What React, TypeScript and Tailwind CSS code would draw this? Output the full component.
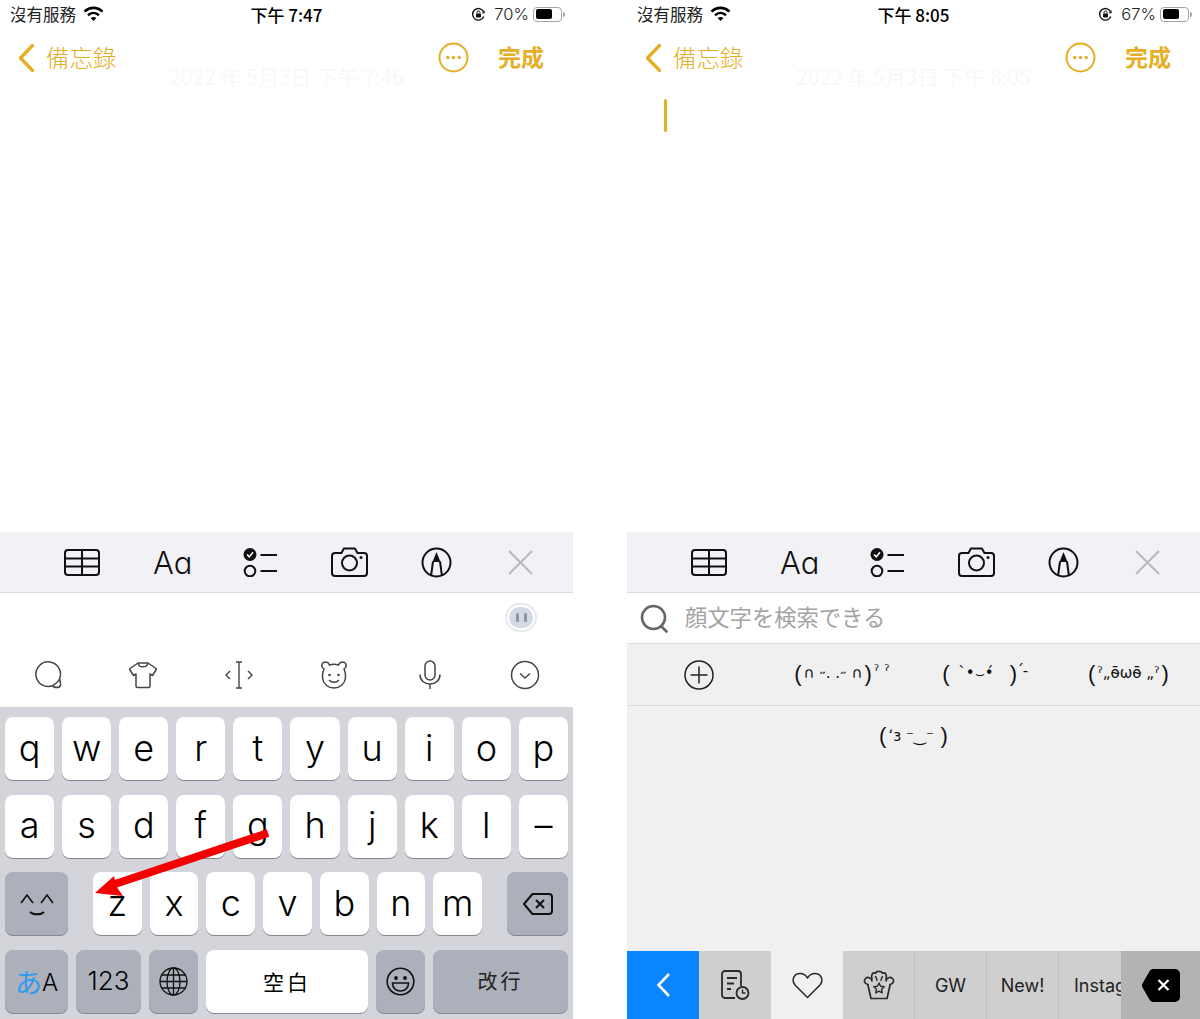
import React from 'react'

const AMBER = '#e5ae24'
const ROWS = ['qwertyuiop', 'asdfghjkl–']
const ROW3 = ['z', 'x', 'c', 'v', 'b', 'n', 'm']
const cjk = "font-['Noto_Sans_CJK_TC',sans-serif]"

function Wifi() {
  return (
    <svg width="21" height="16" viewBox="0 0 21 16" fill="none" stroke="#000" strokeWidth="2.6">
      <path d="M1.5 5.6C6.8.6 14.2.6 19.5 5.6" />
      <path d="M5 9.2c3.3-3 7.7-3 11 0" />
      <path d="M10.5 15 7.6 12c1.7-1.4 4.1-1.4 5.8 0z" fill="#000" stroke="none" />
    </svg>
  )
}

function StatusBar({ time, pct }: { time: string; pct: number }) {
  return (
    <div className={`grid grid-cols-3 items-center h-[28px] pl-[10px] pr-[8px] text-black ${cjk}`}>
      <div className="flex items-center gap-[7px]">
        <span className="text-[16.5px] leading-none text-[#222]">沒有服務</span>
        <Wifi />
      </div>
      <span className="text-center text-[17px] font-medium leading-none pr-[2px]">下午 {time}</span>
      <div className="flex items-center justify-end">
        <svg width="15" height="15" viewBox="0 0 15 15" fill="none" stroke="#111" strokeWidth="1.4">
          <path d="M12.8 9.5A5.8 5.8 0 1 1 12.6 4.6" />
          <path d="M13.6 3.2v3h-3" fill="#111" stroke="none" />
          <rect x="5" y="6.5" width="5" height="4" rx=".8" fill="#111" stroke="none" />
          <path d="M6 6.5V5.4a1.5 1.5 0 0 1 3 0v1.1" strokeWidth="1" />
        </svg>
        <span className="ml-[8px] text-[16.5px] leading-none text-[#222] font-['Inter',sans-serif] font-light">{pct}%</span>
        <div className="ml-[4px] flex items-center">
          <div className="w-[29px] h-[15px] rounded-[4px] border border-[#a5a5a5] p-[1.5px]">
            <div className="h-full rounded-[2px] bg-black" style={{ width: `${pct}%` }} />
          </div>
          <div className="ml-[1px] w-[2px] h-[5px] rounded-r-full bg-[#a5a5a5]" />
        </div>
      </div>
    </div>
  )
}

function NavBar() {
  return (
    <div className={`flex items-center h-[59px] pl-[18px] pr-[29px] ${cjk}`} style={{ color: AMBER }}>
      <svg width="17" height="30" viewBox="0 0 17 30" fill="none" stroke={AMBER} strokeWidth="3.4" strokeLinecap="round" strokeLinejoin="round">
        <path d="M14.5 2.5 2.5 15l12 12.5" />
      </svg>
      <span className="ml-[11px] text-[23.5px] leading-none font-light">備忘錄</span>
      <svg className="ml-auto" width="31" height="31" viewBox="0 0 31 31" fill="none" stroke={AMBER} strokeWidth="2">
        <circle cx="15.5" cy="15.5" r="14" />
        <g fill={AMBER} stroke="none">
          <circle cx="9.8" cy="15.5" r="1.7" />
          <circle cx="15.5" cy="15.5" r="1.7" />
          <circle cx="21.2" cy="15.5" r="1.7" />
        </g>
      </svg>
      <span className="ml-[29px] pb-[2px] text-[23px] leading-none font-bold">完成</span>
    </div>
  )
}

function Toolbar() {
  return (
    <div className="h-[61px] shrink-0 bg-[#f1f1f6] border-b border-[#dcdce0] flex items-center text-[#111]">
      <svg className="ml-[64px]" width="36" height="27" viewBox="0 0 36 27" fill="none" stroke="#111" strokeWidth="2">
        <rect x="1" y="1" width="34" height="25" rx="3" />
        <path d="M1 9.5h34M1 17.5h34M18 1v25" />
      </svg>
      <span className="ml-[53px] w-[38px] text-center text-[31px] leading-none font-light font-['Inter',sans-serif] [font-feature-settings:'cv11']">Aa</span>
      <svg className="ml-[52px]" width="35" height="30" viewBox="0 0 35 30" fill="none" stroke="#111" strokeWidth="2">
        <circle cx="7" cy="7.5" r="6.5" fill="#111" stroke="none" />
        <path d="M4 7.5l2.3 2.4L10 5.2" stroke="#fff" strokeWidth="1.6" />
        <circle cx="7" cy="24" r="5.3" />
        <path d="M17.5 8H34M17.5 24H34" />
      </svg>
      <svg className="ml-[53px]" width="37" height="30" viewBox="0 0 37 30" fill="none" stroke="#111" strokeWidth="2" strokeLinejoin="round">
        <path d="M4 6h6.5l2.4-4.5h11L26.500 6H33a3 3 0 0 1 3 3v17a3 3 0 0 1-3 3H4a3 3 0 0 1-3-3V9a3 3 0 0 1 3-3z" />
        <circle cx="18.500" cy="16" r="7.500" />
        <circle cx="30" cy="10.500" r="1.500" fill="#111" stroke="none" />
      </svg>
      <svg className="ml-[53px]" width="31" height="31" viewBox="0 0 31 31" fill="none" stroke="#111" strokeWidth="2">
        <circle cx="15.500" cy="15.500" r="14" />
        <path d="M15.500 5 11.500 15h8z" fill="#111" stroke="none" />
        <path d="M12 14.500 10 29M19 14.500 21 29" />
      </svg>
      <svg className="ml-[56px]" width="25" height="25" viewBox="0 0 25 25" fill="none" stroke="#b9b9bd" strokeWidth="2">
        <path d="M1 1l23 23M24 1 1 24" />
      </svg>
    </div>
  )
}

function Header({ time, pct, stamp }: { time: string; pct: number; stamp: string }) {
  return (
    <>
      <StatusBar time={time} pct={pct} />
      <NavBar />
      <p className={`-mt-[21px] text-center text-[21px] leading-[20px] text-[#f8f8f8] ${cjk}`}>{stamp}</p>
    </>
  )
}

function SmartRow() {
  return (
    <div className="flex items-center justify-between h-[60px] pb-[4px] pl-[33px] pr-[33px]">
      <svg width="30" height="30" viewBox="0 0 30 30" fill="none" stroke="#444" strokeWidth="1.500">
        <path d="M20 25.500A12.300 12.300 0 1 1 26.500 19" />
        <path d="M20 25.500c.5 2.500 6.500 3.300 7.500-.5.500-2.500-.5-4.800-1-6-.800 2-3.500 4.500-6.500 6.500z" />
      </svg>
      <svg width="30" height="30" viewBox="0 0 30 30" fill="none" stroke="#444" strokeWidth="1.500" strokeLinejoin="round">
        <path d="M10 3 2 8.500c-.5.500-.5 1 0 1.500l3.500 5.500 2.500-1.500v12c0 1 .5 1.500 1.500 1.500h11c1 0 1.500-.5 1.500-1.500V14l2.500 1.500L28 10c.5-.5.5-1 0-1.500L20 3z" />
        <path d="M10 3c.5 5 9.500 5 10 0" />
      </svg>
      <svg width="30" height="30" viewBox="0 0 30 30" fill="none" stroke="#444" strokeWidth="1.400">
        <path d="M12 2h6M12 28h6M15 2v26" />
        <path d="M6 11l-4 4 4 4M24 11l4 4-4 4" />
      </svg>
      <svg width="30" height="30" viewBox="0 0 30 30" fill="none" stroke="#444" strokeWidth="1.500">
        <path d="M5 9C1 6 3 1.500 7 2c2 .3 3 1.500 3.500 3C13.500 4 16.500 4 19.500 5c.5-1.500 1.500-2.700 3.500-3 4-.5 6 4 2 7 1.500 3 2 5.500 1.500 9-.8 6-5.500 10-11.500 10S4.300 24 3.500 18C3 14.500 3.500 12 5 9z" />
        <circle cx="10.500" cy="15" r="1.300" fill="#444" stroke="none" />
        <circle cx="19.500" cy="15" r="1.300" fill="#444" stroke="none" />
        <path d="M10 20c2.500 3 7.500 3 10 0" />
      </svg>
      <svg width="30" height="30" viewBox="0 0 30 30" fill="none" stroke="#444" strokeWidth="1.500">
        <rect x="10" y="1" width="10" height="19" rx="5" />
        <path d="M5 14.500c0 6 4.500 9.500 10 9.500s10-3.500 10-9.500M15 24v5" />
      </svg>
      <svg width="30" height="30" viewBox="0 0 30 30" fill="none" stroke="#444" strokeWidth="1.500">
        <circle cx="15" cy="15" r="13.500" />
        <path d="M10 13.500l5 4.500 5-4.500" />
      </svg>
    </div>
  )
}

function Key({ className = '', dark = false, children }: { className?: string; dark?: boolean; children?: React.ReactNode }) {
  return (
    <div
      className={`h-[63px] rounded-[8px] flex items-center justify-center text-black shadow-[0_1px_0_#85888f] ${
        dark ? 'bg-[#abb0ba]' : 'bg-white'
      } ${className}`}
    >
      {children}
    </div>
  )
}

function Letter({ ch }: { ch: string }) {
  return <span className="text-[36px] leading-none font-light font-['Inter',sans-serif] pb-[2px]">{ch}</span>
}

function Keyboard() {
  return (
    <div className="flex-1 bg-[#d3d5db] flex flex-col gap-[14.500px] pt-[10px] px-[5px]">
      {ROWS.map(row => (
        <div key={row} className="flex gap-[8px]">
          {row.split('').map(ch => (
            <Key key={ch} className="flex-1">
              <Letter ch={ch} />
            </Key>
          ))}
        </div>
      ))}
      <div className="flex">
        <Key dark className="w-[63px]">
          <svg width="34" height="26" viewBox="0 0 34 26" fill="none" stroke="#111" strokeWidth="1.600">
            <path d="M1 12l6-8 6 8M21 12l6-8 6 8" />
            <path d="M10 21c3 3 11 3 14 0" strokeWidth="2" />
          </svg>
        </Key>
        <div className="ml-[25px] flex gap-[8px] w-[389px]">
          {ROW3.map(ch => (
            <Key key={ch} className="flex-1">
              <Letter ch={ch} />
            </Key>
          ))}
        </div>
        <Key dark className="ml-auto w-[61px]">
          <svg width="30" height="22" viewBox="0 0 30 22" fill="none" stroke="#111" strokeWidth="2" strokeLinejoin="round">
            <path d="M9.500 1H26a3 3 0 0 1 3 3v14a3 3 0 0 1-3 3H9.500L1 11z" />
            <path d="M13 7l8 8M21 7l-8 8" />
          </svg>
        </Key>
      </div>
      <div className="flex">
        <Key dark className="w-[63px]">
          <span className={`text-[27px] leading-none text-[#2f9bf0] ${cjk}`}>あ</span>
          <span className="text-[24px] leading-none font-light font-['Inter',sans-serif] mt-[3px]">A</span>
        </Key>
        <Key dark className="ml-[8px] w-[65px]">
          <span className="text-[26px] leading-none font-light font-['Inter',sans-serif]">123</span>
        </Key>
        <Key dark className="ml-[8px] w-[49px]">
          <svg width="29" height="29" viewBox="0 0 29 29" fill="none" stroke="#111" strokeWidth="1.300">
            <circle cx="14.500" cy="14.500" r="13.500" />
            <ellipse cx="14.500" cy="14.500" rx="6.500" ry="13.500" />
            <path d="M14.500 1v27M1 14.500h27M2.800 8h23.400M2.800 21h23.400" />
          </svg>
        </Key>
        <Key className="ml-[8px] w-[162px]">
          <span className={`text-[21px] leading-none tracking-[3px] ${cjk}`}>空白</span>
        </Key>
        <Key dark className="ml-[8px] w-[49px]">
          <svg width="29" height="29" viewBox="0 0 29 29" fill="none" stroke="#111" strokeWidth="1.600">
            <circle cx="14.500" cy="14.500" r="13.300" />
            <circle cx="10" cy="11" r="1.900" fill="#111" stroke="none" />
            <circle cx="19" cy="11" r="1.900" fill="#111" stroke="none" />
            <path d="M6.500 16h16c0 5-3.500 8-8 8s-8-3-8-8z" />
          </svg>
        </Key>
        <Key dark className="ml-[8px] w-[135px]">
          <span className={`text-[20px] leading-none tracking-[3px] text-[#222] ${cjk}`}>改行</span>
        </Key>
      </div>
    </div>
  )
}

function LeftPhone() {
  return (
    <div className="relative w-[573px] h-full flex flex-col bg-white">
      <Header time="7:47" pct={70} stamp="2022 年 5月3日 下午 7:46" />
      <div className="flex-1" />
      <Toolbar />
      <div className="h-[54px] flex justify-end items-center pr-[36px] pb-[6px]">
        <div className="w-[32px] h-[29px] rounded-full border-2 border-[#e6e9ee] bg-white p-[2px]">
          <div className="w-full h-full rounded-full bg-[#d3dae4] flex items-center justify-center gap-[5px]">
            <span className="w-[3px] h-[9px] rounded-full bg-[#8b98a8]" />
            <span className="w-[3px] h-[9px] rounded-full bg-[#8b98a8]" />
          </div>
        </div>
      </div>
      <SmartRow />
      <div className="h-[312px] flex">
        <Keyboard />
      </div>
      {/* red annotation arrow */}
      <svg className="absolute left-0 top-0 pointer-events-none" width="573" height="1019" fill="none">
        <path d="M268 833 112 885" stroke="#f50000" strokeWidth="8" />
        <path d="M95 893 114 876 116 886 123 896z" fill="#f50000" />
      </svg>
    </div>
  )
}

const KAOMOJI = [
  { inner: '∩ ˶. .˶ ∩', tail: 'ˀ ˀ' },
  { inner: '   ̀•⌣•́   ', tail: '՛-' },
  { inner: 'ˀ„ō̴ωō̴ „ˀ', tail: '' },
]

function Kaomoji({ inner, tail }: { inner: string; tail: string }) {
  return (
    <span className="inline-flex items-center justify-center whitespace-nowrap text-[#111] font-['DejaVu_Sans','Noto_Sans',sans-serif] pb-[2px]">
      <span className="text-[22px] leading-none font-light font-['Liberation_Sans',sans-serif]">(</span>
      <span className="text-[15px] leading-none mx-[2px] whitespace-pre">{inner}</span>
      <span className="text-[22px] leading-none font-light font-['Liberation_Sans',sans-serif]">)</span>
      {tail && <span className="text-[15px] leading-none ml-[2px] pb-[4px]">{tail}</span>}
    </span>
  )
}

const tabCell = 'w-[72px] shrink-0 h-full flex items-center justify-center'

function EmojiPanel() {
  return (
    <div className="flex-1 flex flex-col bg-[#f0f0f0]">
      <div className="h-[51px] bg-white border-b border-[#dcdcdc] flex items-center pl-[13px]">
        <svg width="29" height="29" viewBox="0 0 29 29" fill="none" stroke="#666" strokeWidth="2.600">
          <circle cx="13.500" cy="13.500" r="11.500" />
          <path d="M21 22l5.500 5.500" strokeLinecap="round" />
        </svg>
        <span className="ml-[16px] pb-[3px] text-[22.300px] leading-none text-[#a3a3a3] font-['Noto_Sans_CJK_JP',sans-serif]">顔文字を検索できる</span>
      </div>
      <div className="h-[62px] grid grid-cols-4 items-center border-b border-[#dcdcdc]">
        <div className="flex justify-center">
          <svg width="30" height="30" viewBox="0 0 30 30" fill="none" stroke="#222" strokeWidth="1.500">
            <circle cx="15" cy="15" r="14" />
            <path d="M15 6.500v17M6.500 15h17" />
          </svg>
        </div>
        {KAOMOJI.map(k => <Kaomoji key={k.inner} inner={k.inner} tail={k.tail} />)}
      </div>
      <div className="h-[62px] flex items-center justify-center">
        <Kaomoji inner="ʻɜ ⁻‿⁻ " tail="" />
      </div>
      <div className="flex-1" />
      <div className="h-[68px] flex shrink-0">
        <div className="flex-1 min-w-0 flex overflow-hidden bg-[#cfcfcf] text-[#222] text-[18px] font-['Inter',sans-serif]">
          <div className={`${tabCell} bg-[#0a84ff]`}>
            <svg width="17" height="26" viewBox="0 0 17 26" fill="none" stroke="#fff" strokeWidth="2.600">
              <path d="M14 2 3.500 13 14 24" />
            </svg>
          </div>
          <div className={tabCell}>
            <svg width="30" height="32" viewBox="0 0 30 32" fill="none" stroke="#2a2a2a" strokeWidth="1.800">
              <path d="M15 29H5a3 3 0 0 1-3-3V5a3 3 0 0 1 3-3h13a3 3 0 0 1 3 3v12" />
              <path d="M7 9h10M7 14.500h7M7 20h4" />
              <circle cx="22.500" cy="24" r="6" />
              <path d="M22.500 20.500V24h3" strokeWidth="1.400" />
            </svg>
          </div>
          <div className={`${tabCell} bg-[#f0f0f0]`}>
            <svg width="31" height="27" viewBox="0 0 31 27" fill="none" stroke="#2a2a2a" strokeWidth="1.500" strokeLinejoin="round">
              <path d="M15.500 25.500 3 13C-1 8 2 1.500 8 1.500c3.500 0 6 2 7.500 4.500C17 3.500 19.500 1.500 23 1.500c6 0 9 6.500 5 11.500z" />
            </svg>
          </div>
          <div className={`${tabCell} border-r border-[#bfbfbf]`}>
            <svg width="32" height="30" viewBox="0 0 32 30" fill="none" stroke="#2a2a2a" strokeWidth="1.700" strokeLinejoin="round" strokeLinecap="round">
              <path d="M8 28.500 4.800 14.500M24 28.500l3.200-14M8 28.500h16" />
              <path d="M4.800 14.500C1.500 14 .5 10.500 2.500 8.500c2-2 6-1 6.500 2.500" />
              <path d="M27.200 14.500c3.300-.5 4.300-4 2.300-6-2-2-6-1-6.500 2.500" />
              <path d="M9 9C7.500 4.500 10 2 12.500 3.200 13.500.8 18.500.8 19.500 3.200 22 2 24.500 4.500 23 9" />
              <path d="M12.500 6.500c1 1.500 1.500 3 1.500 4M19.500 6.500c-1 1.500-1.500 3-1.500 4" strokeWidth="1.400" />
              <path d="M16 13l1.600 3.300 3.600.5-2.600 2.500.6 3.600-3.200-1.700-3.200 1.700.6-3.600-2.600-2.500 3.600-.5z" strokeWidth="1.400" />
            </svg>
          </div>
          <div className={`${tabCell} border-r border-[#bfbfbf]`}>GW</div>
          <div className={`${tabCell} border-r border-[#bfbfbf]`}>New!</div>
          <div className="shrink-0 h-full flex items-center pl-[15px] whitespace-nowrap">Instagram</div>
        </div>
        <div className="w-[79px] shrink-0 bg-[#b3b3b3] flex items-center pl-[21px]">
          <svg width="38" height="33" viewBox="0 0 38 33" fill="none">
            <path d="M11 0h22a5 5 0 0 1 5 5v23a5 5 0 0 1-5 5H11a4 4 0 0 1-3-1.500L.5 18.500a4 4 0 0 1 0-4L8 1.500A4 4 0 0 1 11 0z" fill="#000" />
            <path d="M16.500 11l10 10M26.500 11l-10 10" stroke="#fff" strokeWidth="2.200" />
          </svg>
        </div>
      </div>
    </div>
  )
}

function RightPhone() {
  return (
    <div className="w-[573px] h-full flex flex-col bg-white">
      <Header time="8:05" pct={67} stamp="2022 年 5月3日 下午 8:05" />
      <div className="h-[446px] shrink-0 pt-[13px] pl-[37px]">
        <div className="w-[3px] h-[33px] rounded-full" style={{ background: AMBER }} />
      </div>
      <Toolbar />
      <EmojiPanel />
    </div>
  )
}

export default function App() {
  return (
    <div className="w-[1200px] h-[1019px] flex justify-between bg-white overflow-hidden">
      <LeftPhone />
      <RightPhone />
    </div>
  )
}
